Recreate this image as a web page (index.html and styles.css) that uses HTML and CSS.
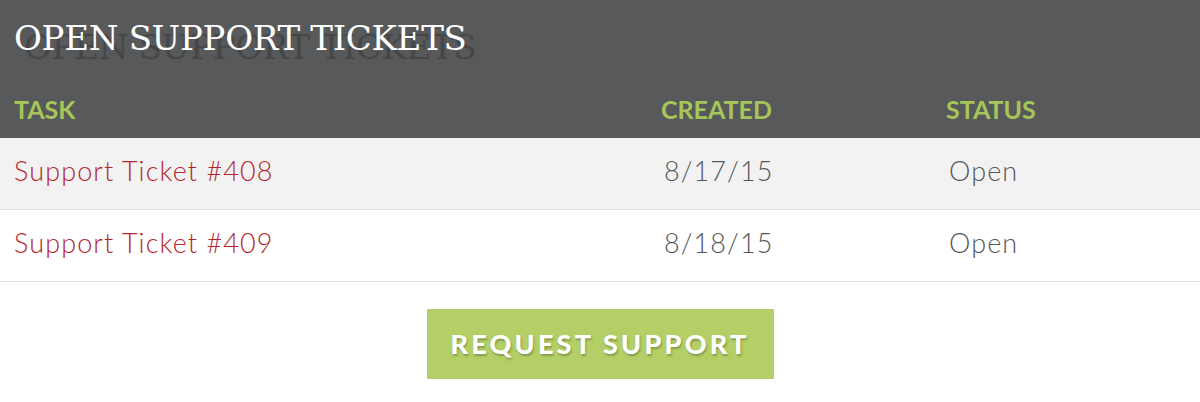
FILE: index.html
```html
<!DOCTYPE html>
<html lang="en">

<head>
    <meta charset="UTF-8">
    <meta name="viewport" content="width=device-width, initial-scale=1.0">
    <title>Open Support Tickets</title>
    <link rel="stylesheet" href="styles.css">
</head>

<body>
    <div class="tickets">
        <h1 class="tickets-title">OPEN SUPPORT TICKETS</h1>
        <table class="tickets-table">
            <thead>
                <tr>
                    <th class="col-task">TASK</th>
                    <th class="col-created">CREATED</th>
                    <th class="col-status">STATUS</th>
                </tr>
            </thead>
            <tbody>
                <tr>
                    <td><a href="#">Support Ticket #408</a></td>
                    <td>8/17/15</td>
                    <td>Open</td>
                </tr>
                <tr>
                    <td><a href="#">Support Ticket #409</a></td>
                    <td>8/18/15</td>
                    <td>Open</td>
                </tr>
            </tbody>
        </table>
        <div class="tickets-actions">
            <a href="#" class="request-button">REQUEST SUPPORT</a>
        </div>
    </div>
</body>

</html>
```

FILE: styles.css
```css
body {
    margin: 0;
    font-family: Lato, "Open Sans", sans-serif;
    background-color: #fff;
    color: #555658;
}

.tickets-title {
    margin: 0;
    padding: 16px 14px 16px;
    background-color: #58595b;
    color: #fff;
    font-family: "DejaVu Serif", serif;
    font-weight: normal;
    font-size: 34px;
    line-height: 44px;
    letter-spacing: -0.3px;
    text-shadow: 10px 9px 1px rgba(0, 0, 0, 0.22);
}

.tickets-table {
    width: 100%;
    border-collapse: collapse;
}

th,
td {
    text-align: left;
    padding: 0 0 0 14px;
}

th {
    background-color: #58595b;
    color: #a6c659;
    font-size: 25px;
    font-weight: bold;
    height: 59px;
    padding-top: 3px;
}

.col-task {
    width: 633px;
}

.col-created {
    width: 271px;
}

td {
    height: 62px;
    padding-bottom: 8px;
    padding-top: 1px;
    font-size: 27px;
    font-weight: 300;
    letter-spacing: 1.1px;
    border-bottom: 1px solid #e3e3e3;
}

td + td {
    padding-left: 17px;
}

tbody tr:nth-child(odd) td {
    background-color: #f2f2f2;
}

td a {
    color: #b3282d;
    text-decoration: none;
}

.tickets-actions {
    display: flex;
    justify-content: center;
    padding: 27px 0 23px;
}

.request-button {
    display: block;
    width: 347px;
    height: 70px;
    line-height: 70px;
    text-align: center;
    background-color: #b3cf66;
    color: #fff;
    font-size: 27px;
    font-weight: 900;
    letter-spacing: 3.2px;
    text-decoration: none;
    text-shadow: 1px 2px 2px rgba(0, 0, 0, 0.25);
}
```
